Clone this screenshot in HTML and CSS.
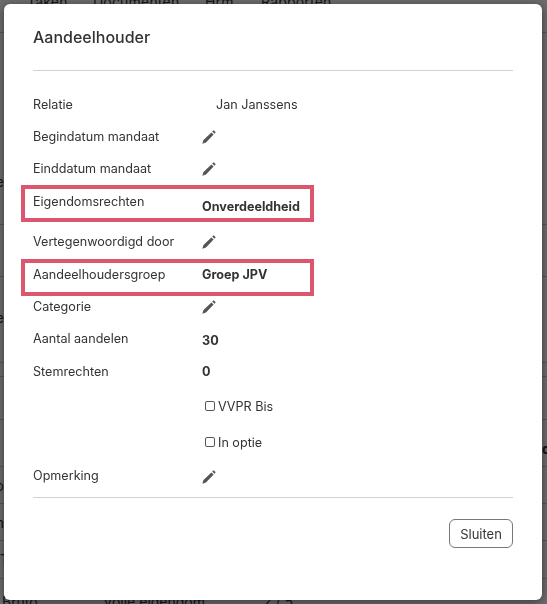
FILE: index.html
```html
<!DOCTYPE html>
<html lang="nl">
<head>
<meta charset="utf-8">
<title>Aandeelhouder</title>
<link rel="stylesheet" href="styles.css">
</head>
<body>
<svg class="defs" width="0" height="0" aria-hidden="true">
  <symbol id="pencil" viewBox="0 0 14 14">
    <path d="M.3 13.7 1.5 10 9.4 2.4 11.6 4.6 4 12.5zM10.2 1.6 11.7.3 13.7 2.3 12.4 3.8z"/>
  </symbol>
</svg>
<div class="page">
  <nav class="tabs">
    <span class="tab tab-a">Taken</span>
    <span class="tab tab-b">Documenten</span>
    <span class="tab tab-c">Hrm</span>
    <span class="tab tab-d">Rapporten</span>
  </nav>
  <div class="table">
    <div class="tr tr-1"><span class="lead">Adre</span></div>
    <div class="tr tr-2"></div>
    <div class="tr tr-3"><span class="lead">Type</span></div>
    <div class="tr tr-4"></div>
    <div class="tr tr-5"></div>
    <div class="tr tr-6"><span class="head">de</span></div>
    <div class="tr tr-7"><span class="lead">Ho</span></div>
    <div class="tr tr-8"><span class="lead">Naam</span></div>
    <div class="tr tr-9"><span class="start">Type</span></div>
    <div class="tr tr-10"><span class="start bruto">Bruto</span><span class="start volle">Volle eigendom</span><span class="start ratio">2 / 5</span></div>
  </div>
</div>
<div class="backdrop"></div>
<section class="modal">
  <h1 class="title">Aandeelhouder</h1>
  <hr class="rule">
  <div class="rows">
    <div class="row h-32"><span class="label">Relatie</span><span class="value plain">Jan Janssens</span></div>
    <div class="row h-32"><span class="label">Begindatum mandaat</span><span class="value"><svg class="edit"><use href="#pencil"/></svg></span></div>
    <div class="row h-32"><span class="label">Einddatum mandaat</span><span class="value"><svg class="edit"><use href="#pencil"/></svg></span></div>
    <div class="row h-40 marked top-label"><span class="label">Eigendomsrechten</span><span class="value bold">Onverdeeldheid</span></div>
    <div class="row h-34"><span class="label">Vertegenwoordigd door</span><span class="value"><svg class="edit"><use href="#pencil"/></svg></span></div>
    <div class="row h-32 marked"><span class="label">Aandeelhoudersgroep</span><span class="value bold">Groep JPV</span></div>
    <div class="row h-32"><span class="label">Categorie</span><span class="value"><svg class="edit"><use href="#pencil"/></svg></span></div>
    <div class="row h-32"><span class="label">Aantal aandelen</span><span class="value bold nudge">30</span></div>
    <div class="row h-34"><span class="label">Stemrechten</span><span class="value bold">0</span></div>
    <div class="row h-36"><span class="label"></span><label class="value check"><input type="checkbox" class="box">VVPR Bis</label></div>
    <div class="row h-36"><span class="label"></span><label class="value check"><input type="checkbox" class="box">In optie</label></div>
    <div class="row h-31"><span class="label">Opmerking</span><span class="value"><svg class="edit"><use href="#pencil"/></svg></span></div>
  </div>
  <hr class="rule rule-bottom">
  <footer class="footer"><button class="close" type="button">Sluiten</button></footer>
</section>
</body>
</html>
```

FILE: styles.css
```css
*, *::before, *::after { box-sizing: border-box; }
html, body { margin: 0; height: 100%; overflow: hidden; }
body { font-family: Inter, "Liberation Sans", sans-serif; color: #333; background: #fff; }
.defs { display: block; height: 0; }

.page { width: 547px; height: 604px; overflow: hidden; }
.tabs { height: 33px; display: flex; border-bottom: 1px solid #ccc; padding-left: 27px; }
.tab { font-size: 14px; line-height: 4px; height: 4px; letter-spacing: .2px; }
.tab-a { width: 66px; }
.tab-b { width: 112px; }
.tab-c { width: 56px; }

.table { display: grid; grid-template-rows: 192px 52px 86px 14px 43px 47px 37px 37px 38px 30px; font-size: 14px; }
.tr { border-bottom: 1px solid #ccc; display: flex; align-items: flex-end; white-space: nowrap; }
.lead { width: 4px; display: flex; justify-content: flex-end; }
.tr-1 { padding-bottom: 34px; }
.tr-3 { padding-bottom: 36px; }
.tr-6 { justify-content: flex-end; padding-bottom: 9px; }
.head { font-weight: 700; width: 5px; }
.tr-7 { padding-bottom: 9px; }
.tr-8 { padding-bottom: 9px; }
.tr-9, .tr-10 { align-items: flex-start; }
.tr-9 { padding-top: 10px; }
.tr-10 { padding-top: 14px; border-bottom: 0; }
.bruto { width: 103px; padding-left: 2px; }
.volle { width: 160px; }

.backdrop { position: fixed; inset: 0; background: rgba(0, 0, 0, .58); }

.modal {
  position: fixed; left: 4px; top: 4px; width: 538px; height: 596px;
  background: #fff; border-radius: 6px; box-shadow: 0 2px 10px rgba(0, 0, 0, .45);
  padding: 0 29px; display: flex; flex-direction: column;
}
.title { margin: 0; height: 66px; display: flex; align-items: center; font-size: 16px; font-weight: 500; color: #333; }
.rule { margin: 0; border: 0; border-top: 1px solid #d2d2d2; height: 1px; flex: none; }
.rows { padding-top: 17px; font-size: 12.6px; color: #333; }
.row { display: flex; align-items: center; position: relative; }
.h-31 { height: 31px; }
.h-32 { height: 32px; }
.h-34 { height: 34px; }
.h-36 { height: 36px; }
.h-40 { height: 40px; }
.label { width: 169px; flex: none; }
.top-label .label { align-self: flex-start; padding-top: 10px; }
.top-label .value { padding-top: 4px; }
.value { display: flex; align-items: center; }
.plain { padding-left: 14px; }
.bold { font-weight: 700; }
.nudge { padding-top: 4px; }
.edit { width: 14px; height: 14px; fill: #555; margin-top: 2px; }
.check { padding-left: 3px; gap: 3px; }
.box { appearance: none; margin: 0; width: 10px; height: 10px; border: 1px solid #555; border-radius: 2px; background: #fff; }
.marked::after {
  content: ""; position: absolute; left: -12px; top: 1px; width: 293px; height: 37px;
  border: 4px solid #dc5670; pointer-events: none;
}
.rule-bottom { margin-top: 6px; }
.footer { display: flex; justify-content: flex-end; padding-top: 21px; }
.close {
  width: 64px; height: 29px; padding: 0; background: #fff; border: 1px solid #777; border-radius: 6px;
  font: 13px Inter, "Liberation Sans", sans-serif; color: #333;
}
```
